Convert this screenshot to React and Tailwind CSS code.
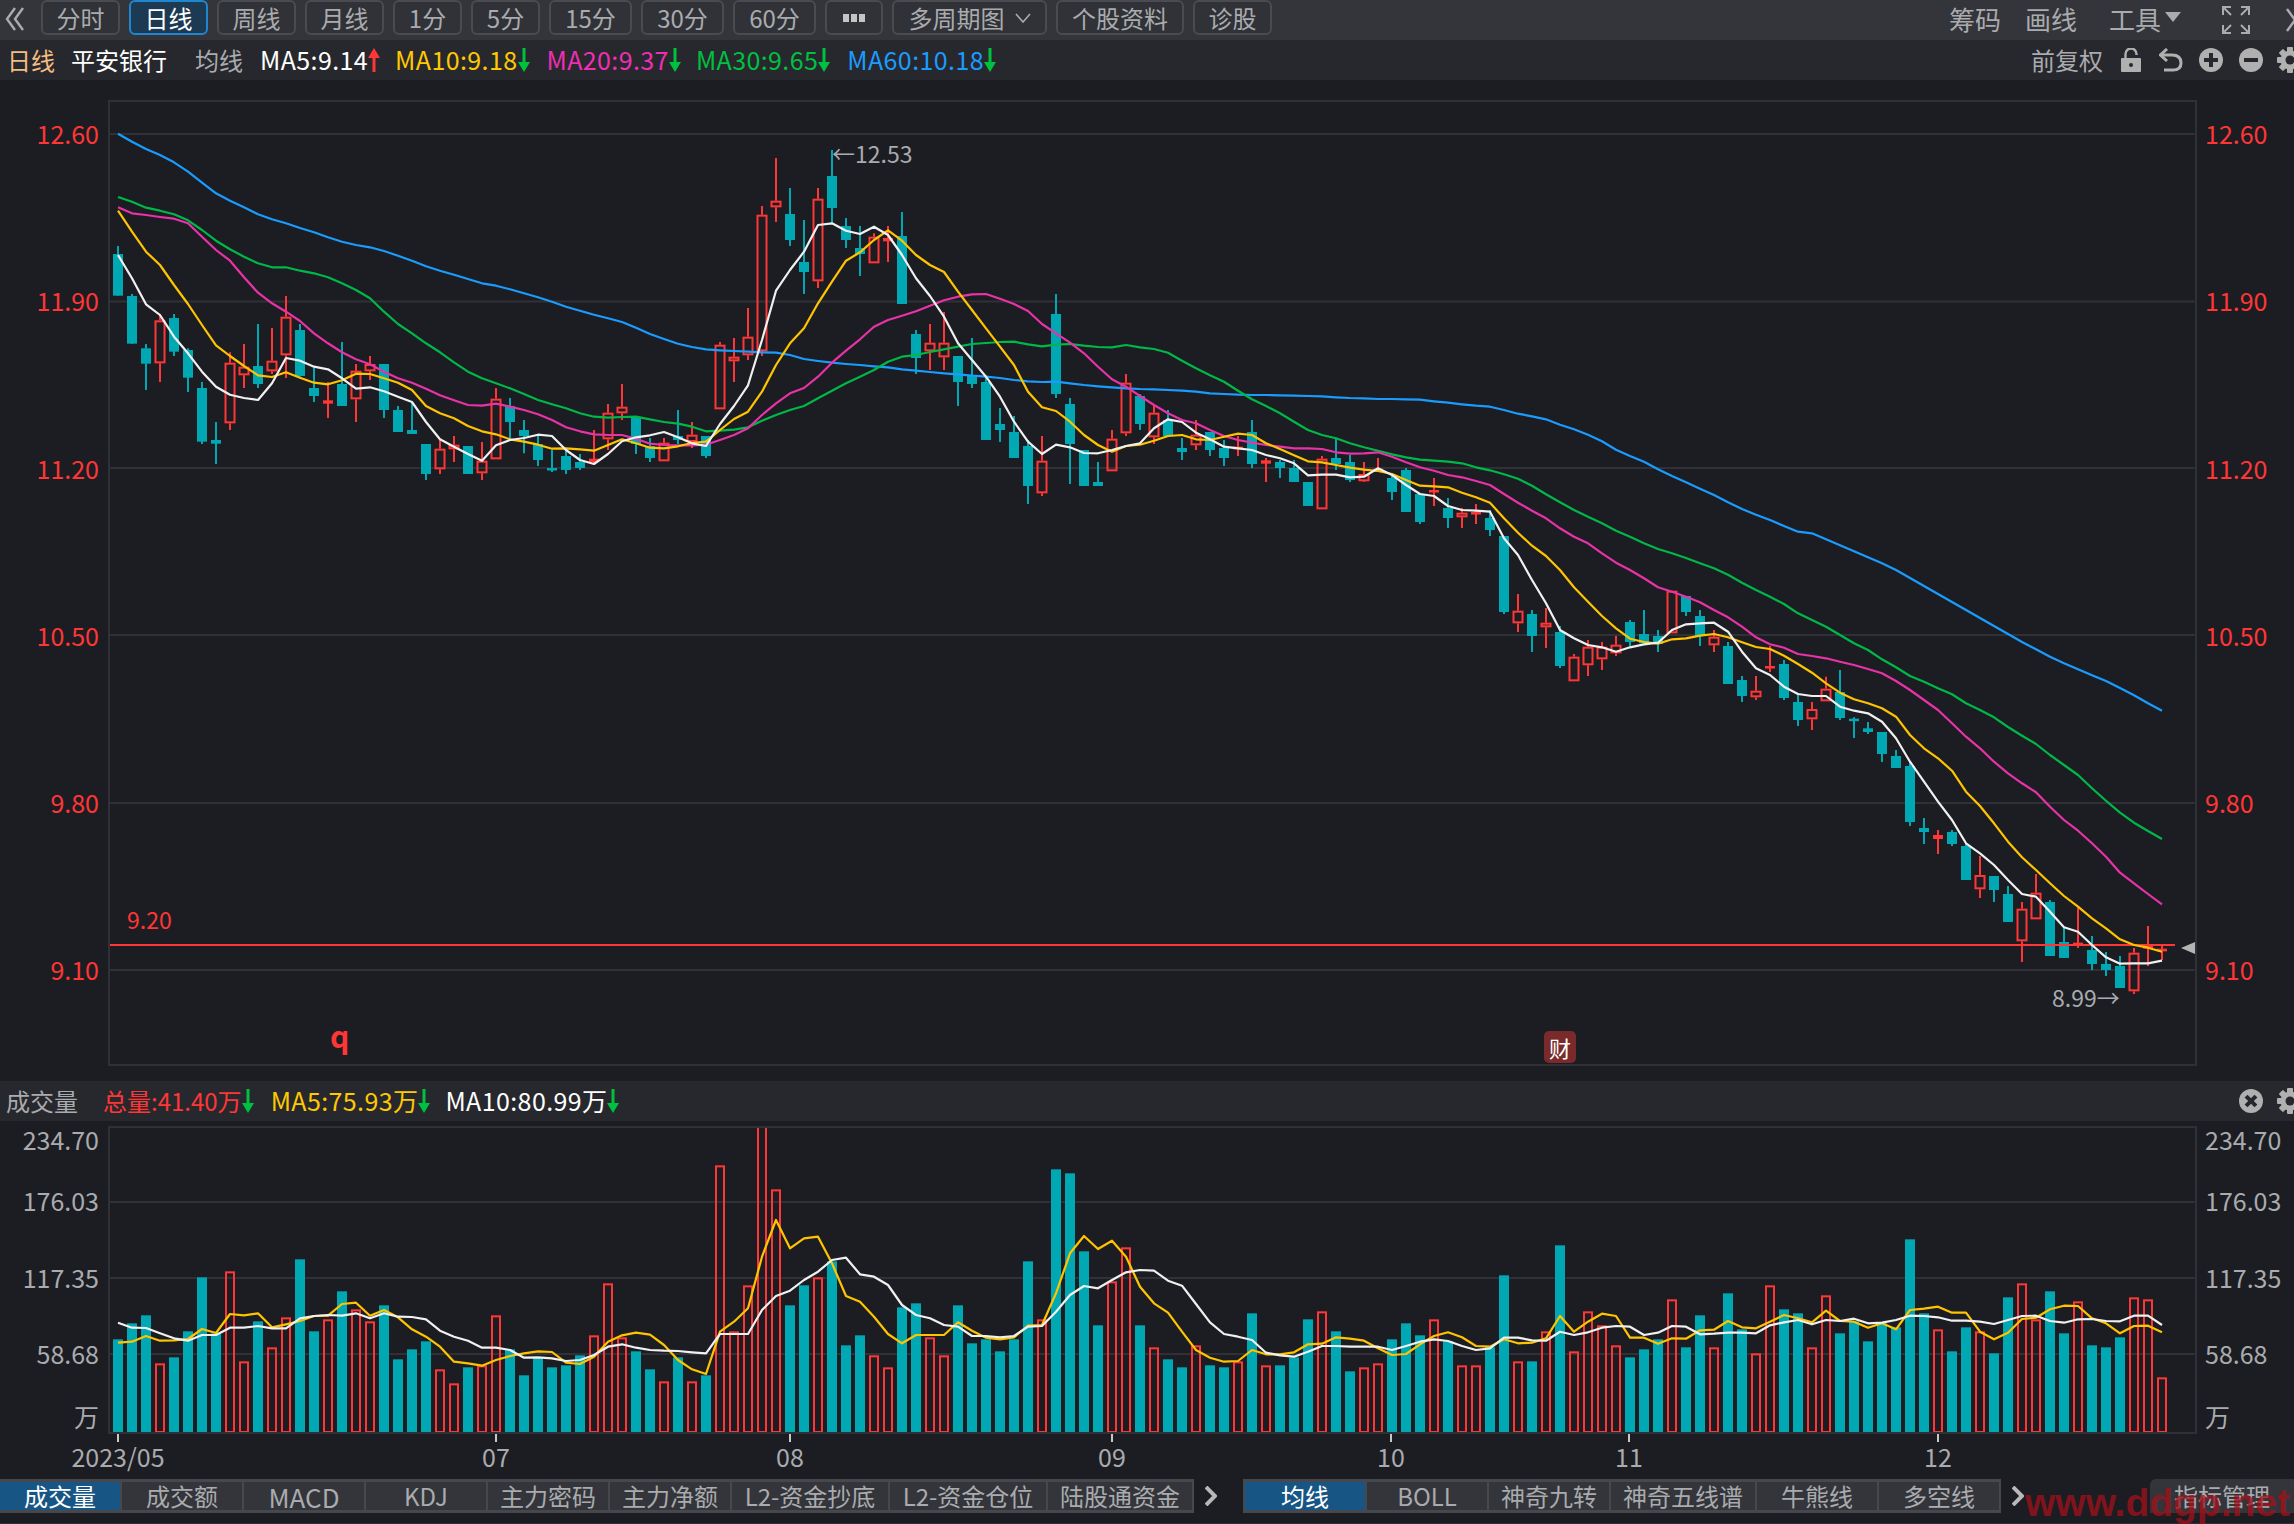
import React from "react";

const FX = (i) => 118 + 14 * i;

// [red?, bodyTop, bodyBottom, wickHigh, wickLow] in three traced scales
const C1 = [
[0,402,527,378,527],[0,528,671,522,671],[0,685,731,672,810],[1,601,730,582,786],[0,594,695,582,708],[0,690,773,685,816],[0,804,965,786,972],[0,960,971,906,1032],[1,728,910,697,930],[1,740,766,672,804],
[0,738,792,612,804],[1,722,754,624,762],[1,590,706,528,774],[0,630,768,612,770],[0,804,828,742,846],[1,841,851,786,894],[0,792,858,666,858],[1,752,838,732,906],[1,732,754,708,780],[0,732,870,732,894],
[0,870,936,858,936],[0,930,942,846,942],[0,972,1062,972,1080],[1,986,1048,960,1062],[1,974,988,948,1026],[0,978,1062,978,1062],[1,1022,1060,966,1080],[1,836,1018,804,1018],[0,858,906,834,960],[0,930,948,900,1000],
[0,972,1020,948,1038],[0,1044,1050,990,1056],[0,1008,1050,990,1062],[0,1026,1044,1002,1050],[1,1016,1026,930,1030],[1,878,958,852,990],[1,860,880,792,900],[0,894,972,894,1002],[0,978,1014,954,1026],[1,968,1024,954,1024],
[0,948,960,870,972],[1,944,966,906,984],[0,948,1008,948,1014],[1,674,868,666,868],[1,710,724,654,786],[1,650,706,564,720],[1,284,694,258,708],[1,242,262,114,306],[0,282,360,204,378],[0,426,456,300,522],
[1,236,484,204,504],[0,168,264,90,310],[0,318,360,294,384],[0,384,402,318,468],[1,350,430,340,430],[1,354,364,318,426],[0,348,552,276,552],[0,642,714,630,762],[1,668,694,612,750],[1,668,712,576,750],
[0,708,786,708,858],[0,768,792,654,804],[0,786,960,768,960],[0,912,930,864,966],[0,936,1014,888,1014],[0,978,1098,960,1152],[1,1022,1120,948,1128],[0,582,822,522,834],[0,852,972,834,1092],[0,990,1098,990,1098],
[0,1086,1098,1026,1098],[1,956,1054,930,1054],[1,788,940,762,948],[0,828,912,822,930],[1,878,952,858,972],[0,900,948,870,950],[0,984,996,954,1020],[1,944,976,900,990],[0,936,990,936,1008],[0,984,1014,960,1038],
[1,980,988,948,1008],[0,936,1032,900,1044],[1,1021,1031,1014,1086],[0,1026,1044,1020,1074],[0,1044,1086,1020,1086],[0,1086,1158,1086,1158],[1,1016,1168,1008,1168],
];
const C2 = [
[0,174,192,117,210],[0,186,240,165,246],[1,222,244,186,246],[1,206,216,174,216],[0,234,276,228,300],[0,210,336,204,336],[0,282,366,282,372],[1,270,276,234,318],[0,324,354,294,384],[1,338,352,324,384],
[1,336,342,312,372],[0,354,390,330,408],[0,408,636,408,642],[1,632,670,582,696],[0,642,708,630,756],[1,668,682,624,744],[0,696,798,678,804],[1,770,844,762,844],[1,740,796,720,828],[1,740,778,726,810],
[1,734,760,708,768],[0,666,726,660,738],[0,702,730,630,730],[0,708,732,690,756],[1,572,700,572,700],[0,588,636,588,648],[0,648,708,630,738],[1,710,736,690,756],[0,738,852,726,852],[0,840,888,828,906],
[1,872,892,828,900],[1,798,804,738,816],[0,792,894,780,900],[0,906,960,882,978],
];
const C3 = [
[1,87,118,66,150],[1,26,64,-10,64],[0,36,114,-30,120],[0,116,119,112,174],[0,145,156,126,162],[0,156,222,156,246],[0,228,264,210,264],[0,258,426,246,438],[0,444,456,414,492],[1,465,477,450,522],
[0,456,492,450,498],[0,498,600,490,600],[1,585,628,528,654],[0,588,630,588,666],[0,642,726,618,726],[1,686,784,666,846],[1,638,718,582,718],[0,666,828,660,828],[0,786,834,744,834],[1,788,796,684,804],
[0,810,852,768,870],[0,852,870,816,888],[0,858,924,828,924],[1,818,934,804,942],[1,798,806,738,858],[1,806,814,798,840],
];
const conv = (b) => (r) => [r[0], b + r[1] / 3, b + r[2] / 3, b + r[3] / 3, b + r[4] / 3];
const CANDLES = [...C1.map(conv(120)), ...C2.map(conv(400)), ...C3.map(conv(680))];

const ma = (a, b, c, d) => [
  ...a.map((y) => 120 + y / 3),
  ...b.map((y) => 120 + y / 3),
  ...c.map((y) => 400 + y / 3),
  ...d.map((y) => 680 + y / 3),
].map((y, i) => `${FX(i)},${y.toFixed(1)}`).join(" ");

const MA5 = ma(
[405,475,553,585,650,700,755,800,824,834,840,790,714,722,740,748,775,806,802,814,830,846,906,958,980,1002,1022,976,960,954,944,948,990,1020,1032,1002,964,952,946,936,952,970,978,912,858,796,660,512,450],
[395,315,310,332,342,320,345,405,475,528,590,670,720,770,830,905,965,1002,974,982,999,1000,990,978,970,925,898,906,938,958,980,985,990,1005,1015,1030,1066,1064,1064,1072,1070],
[205,225,255,282,288,318,330,332,335,415,465,540,610,690,715,735,742,755,742,733,728,690,673,670,668,695,755,805,825,860,882],
[48,48,80,92,100,125,175,245,305,365,420,490,520,555,600,642,650,695,742,755,795,832,851,850,850,842]);
const MA10 = ma(
[272,335,395,435,495,552,615,676,708,738,766,771,757,773,788,793,781,761,762,775,788,810,858,880,895,918,934,943,958,965,974,986,985,988,992,975,958,970,983,985,979,969,965,930,897,875,815,735,670],
[625,550,485,422,397,360,331,362,405,435,456,515,570,625,680,735,815,862,873,905,945,975,995,978,974,962,948,945,958,960,950,941,945,970,987,1006,1024,1027,1035,1043,1049],
[213,222,240,257,259,262,278,292,308,355,398,437,468,510,562,605,648,685,716,726,731,718,715,707,702,712,727,741,747,767,792],
[-22,10,38,58,70,85,110,165,205,235,272,335,378,430,485,532,570,610,648,680,715,745,778,795,803,815]);
const MA20 = ma(
[262,280,285,291,296,310,350,390,422,472,518,550,575,603,640,670,697,718,733,755,775,788,806,826,841,855,857,851,860,870,883,900,922,934,943,945,945,956,971,975,976,976,974,960,945,925,885,850,820],
[804,770,728,692,658,620,600,587,574,557,541,530,523,522,536,552,573,612,640,668,700,740,778,800,828,855,880,900,910,930,948,960,968,975,980,985,985,987,997,1001,1000],
[157,170,187,202,212,225,232,243,255,282,308,332,355,385,410,430,460,488,510,535,562,575,590,607,630,652,680,712,733,743,762],
[-72,-65,-55,-45,-33,-20,3,30,60,90,130,170,205,245,280,310,337,380,420,452,490,530,578,610,642,673]);
const MA30 = ma(
[231,245,263,272,283,301,330,362,388,410,430,442,442,452,460,472,490,510,535,575,612,640,670,697,727,755,775,790,805,822,840,853,865,880,890,893,891,890,898,906,911,920,934,932,929,922,902,885,870],
[858,835,812,790,770,750,725,710,705,696,688,680,672,669,666,665,673,679,674,672,677,681,682,675,682,687,698,722,745,766,785,812,838,858,880,905,930,945,955,970,982],
[152,163,172,179,182,185,190,202,211,223,236,257,283,307,330,350,370,392,410,430,447,460,474,490,505,524,548,570,590,612,640],
[-180,-160,-135,-110,-90,-62,-38,-12,5,25,43,70,90,112,141,167,192,225,255,285,325,362,398,428,453,477]);
const MA60 = ma(
[41,65,87,105,127,155,188,220,242,262,283,298,310,324,337,352,365,375,382,393,407,422,439,452,464,477,490,497,508,520,532,545,560,572,584,595,606,623,642,657,671,681,688,691,693,695,697,698,705],
[717,723,728,732,735,739,742,748,752,756,760,763,767,770,774,780,784,786,785,790,795,799,802,805,807,808,810,812,815,820,822,824,825,825,826,827,828,829,832,834,835],
[-3,-3,-2,-1,4,8,13,17,20,30,41,49,58,74,88,104,124,149,168,185,208,228,247,266,285,307,327,344,360,378,395],
[-440,-422,-404,-386,-368,-350,-330,-306,-282,-258,-234,-210,-186,-162,-138,-114,-92,-70,-50,-32,-14,3,24,46,70,92]);

const VOL = [
838,790,766,-910,892,814,652,820,-634,-904,784,-862,-772,598,814,-778,694,-748,-784,736,898,868,844,-928,-970,922,-916,-766,868,946,892,922,916,886,-826,-670,-832,874,928,-964,892,-964,946,-316,-814,-676,-197,-388,736,676,-652,604,856,826,-886,-922,742,730,-832,-886,736,850,838,874,838,604,-778,328,340,574,796,-664,-562,796,
-862,898,922,-856,916,922,-904,760,-916,916,892,778,-754,814,934,-922,-910,838,790,826,-778,844,-916,-916,862,646,-904,904,-814,556,-874,-754,-796,-856,892,868,838,-718,862,766,-862,700,808,-880,-676,748,760,-862,-706,820,784,844,790,802,538,760,-808,874,802,-814,880,712,-670,-778,694,820,-724,856,862,832,-712,-718,-952,
];
const vline = (arr) => arr.map((y, i) => `${FX(i)},${(1060 + y / 3).toFixed(1)}`).join(" ");
const VMA5 = vline([
848,845,828,842,841,837,807,819,762,766,760,802,793,783,768,767,732,728,767,750,772,808,830,860,905,910,917,900,888,880,874,876,908,912,890,845,826,818,824,855,900,928,942,815,785,745,590,480,565,535,530,610,708,725,770,822,850,825,825,825,787,812,833,838,832,797,795,700,580,528,567,542,590,680,
730,758,815,870,893,905,903,870,883,883,877,853,851,832,836,842,865,885,882,853,828,817,832,858,860,838,850,848,835,768,815,785,761,768,833,833,851,835,836,811,809,783,802,805,785,765,775,787,752,783,785,803,790,808,750,746,740,758,758,815,838,818,777,773,748,737,738,775,790,820,798,797,817]);
const VMA10 = vline([
788,803,804,820,835,842,825,825,803,803,798,805,805,775,768,765,767,760,775,760,770,771,778,812,830,842,863,863,870,893,892,895,903,900,885,860,853,863,870,872,873,877,880,822,822,822,750,708,692,660,635,600,593,643,650,675,735,765,775,795,800,828,828,832,828,800,798,755,705,678,685,660,637,630,
632,662,677,732,787,822,830,840,878,886,890,875,858,858,860,860,860,870,858,845,838,843,858,870,865,833,833,841,842,815,825,817,803,798,800,825,818,798,800,823,821,818,818,820,796,787,780,793,780,783,776,790,788,780,767,768,772,782,782,785,792,780,768,767,783,788,778,777,783,784,767,767,795]);

const RED = "#ff3636";
const TEAL = "#00a8b3";
const GRID = "#303136";

function Candles() {
  return CANDLES.map((c, i) => {
    const x = FX(i);
    const [red, top, bot, hi, lo] = c;
    const col = red ? RED : TEAL;
    const thin = bot - top <= 4.5;
    return (
      <g key={i}>
        {red && !thin ? (
          <>
            <line x1={x} x2={x} y1={hi} y2={top} stroke={col} strokeWidth="2" />
            <line x1={x} x2={x} y1={bot} y2={lo} stroke={col} strokeWidth="2" />
            <rect x={x - 4.5} y={top + 1} width="9" height={Math.max(bot - top - 2, 1)} fill="none" stroke={col} strokeWidth="2" />
          </>
        ) : (
          <>
            <line x1={x} x2={x} y1={hi} y2={lo} stroke={col} strokeWidth="2" />
            <rect x={x - 5} y={top} width="10" height={Math.max(bot - top, 2.5)} fill={col} />
          </>
        )}
      </g>
    );
  });
}

function VolBars() {
  return VOL.map((v, i) => {
    const x = FX(i);
    const top = 1060 + Math.abs(v) / 3;
    return v < 0 ? (
      <rect key={i} x={x - 4} y={top + 1} width="8" height={1431 - top} fill="none" stroke={RED} strokeWidth="2" />
    ) : (
      <rect key={i} x={x - 5} y={top} width="10" height={1432 - top} fill={TEAL} />
    );
  });
}

const Line = ({ p, c, w = 2.2 }) => <polyline points={p} fill="none" stroke={c} strokeWidth={w} strokeLinejoin="round" />;

const Down = () => (
  <svg viewBox="0 0 12 24" className="w-[12px] h-[24px] shrink-0">
    <path d="M4.5 0H7.5V14H12L6 24L0 14H4.5Z" fill="#00c040" />
  </svg>
);
const Up = () => (
  <svg viewBox="0 0 12 24" className="w-[12px] h-[24px] shrink-0">
    <path d="M4.5 24H7.5V10H12L6 0L0 10H4.5Z" fill="#ff3636" />
  </svg>
);

function Btn({ w, active, children }) {
  return (
    <div
      style={{ width: w }}
      className={
        "h-[35px] shrink-0 rounded-[6px] border-2 flex items-center justify-center leading-none " +
        (active ? "border-[#1f86cf] bg-[#1c3a52] text-white" : "border-[#494b50] bg-[#303237] text-[#a9abae]")
      }
    >
      {children}
    </div>
  );
}

function Tab({ w, active, cls = "", children }) {
  return (
    <div
      style={{ width: w }}
      className={
        "h-full shrink-0 flex items-center justify-center " + cls + " " +
        (active ? "bg-[#175585] text-white" : "bg-[#33353a] text-[#a9abae]")
      }
    >
      {children}
    </div>
  );
}

const Chev = ({ left, cls = "" }) => (
  <svg viewBox="0 0 20 24" className={cls} fill="none" stroke="#a9abae" strokeWidth="2.4">
    {left ? (
      <>
        <path d="M10 1L2 12L10 23" />
        <path d="M18 1L10 12L18 23" />
      </>
    ) : (
      <>
        <path d="M2 1L10 12L2 23" />
        <path d="M10 1L18 12L10 23" />
      </>
    )}
  </svg>
);

const Gear = ({ bg }) => (
  <svg viewBox="0 0 26 26" className="w-[26px] h-[26px] shrink-0">
    <g fill="#b0b0b0">
      {[0, 45, 90, 135].map((a) => (
        <rect key={a} x="10" y="0" width="6" height="26" rx="1" transform={`rotate(${a} 13 13)`} />
      ))}
      <circle cx="13" cy="13" r="9.5" />
    </g>
    <circle cx="13" cy="13" r="4.5" fill={bg} />
  </svg>
);

const CircleIcon = ({ kind }) => (
  <svg viewBox="0 0 24 24" className="w-[24px] h-[24px] shrink-0">
    <circle cx="12" cy="12" r="12" fill="#b0b0b0" />
    <g fill="#27282d" transform={kind === "x" ? "rotate(45 12 12)" : undefined}>
      <rect x="5" y="10" width="14" height="4" />
      {kind !== "minus" && <rect x="10" y="5" width="4" height="14" />}
    </g>
  </svg>
);

const Axis = ({ children, right, cls = "" }) => (
  <div className={"h-[40px] flex items-center " + (right ? "" : "justify-end pr-[9px] ") + cls}>{children}</div>
);
const PRICES = ["12.60", "11.90", "11.20", "10.50", "9.80", "9.10"];

const PriceAxis = ({ right }) => (
  <div className={"flex flex-col gap-[127.2px] pt-[34px] text-[25px] text-[#ff3636] " + (right ? "pl-[8px]" : "w-[108px] shrink-0")}>
    {PRICES.map((p) => (
      <Axis key={p} right={right}>{p}</Axis>
    ))}
  </div>
);

const VolAxis = ({ right }) => (
  <div className={"flex flex-col text-[25px] text-[#a9abae] pt-[5px] " + (right ? "pl-[8px]" : "w-[108px] shrink-0")}>
    <div className={"h-[28px] flex items-center " + (right ? "" : "justify-end pr-[9px]")}>234.70</div>
    <div className={"h-[28px] mt-[33px] flex items-center " + (right ? "" : "justify-end pr-[9px]")}>176.03</div>
    <div className={"h-[28px] mt-[49px] flex items-center " + (right ? "" : "justify-end pr-[9px]")}>117.35</div>
    <div className={"h-[28px] mt-[48px] flex items-center " + (right ? "" : "justify-end pr-[9px]")}>58.68</div>
    <div className={"h-[28px] mt-[35px] flex items-center " + (right ? "" : "justify-end pr-[9px]")}>万</div>
  </div>
);

const DATES = [
  ["2023/05", 118],
  ["07", 496],
  ["08", 790],
  ["09", 1112],
  ["10", 1391],
  ["11", 1629],
  ["12", 1938],
];

const Sep = () => (
  <svg viewBox="0 0 12 20" className="w-[12px] h-[20px]" fill="none" stroke="#b8b8b8" strokeWidth="4">
    <path d="M1 1L10 10L1 19" />
  </svg>
);

export default function App() {
  return (
    <div className="relative w-[2294px] h-[1524px] overflow-hidden flex flex-col bg-[#1c1d22] text-[24px] font-['Noto_Sans_CJK_SC','Noto_Sans',sans-serif]">
      {/* toolbar */}
      <div className="h-[40px] shrink-0 bg-[#33353a] flex items-start text-[#a9abae]">
        <Chev left cls="w-[20px] h-[24px] mt-[7px] ml-[5px] mr-[16px] shrink-0" />
        <div className="flex gap-[9px]">
          <Btn w={79}>分时</Btn>
          <Btn w={79} active>日线</Btn>
          <Btn w={79}>周线</Btn>
          <Btn w={79}>月线</Btn>
          <Btn w={69}>1分</Btn>
          <Btn w={69}>5分</Btn>
          <Btn w={83}>15分</Btn>
          <Btn w={83}>30分</Btn>
          <Btn w={83}>60分</Btn>
          <Btn w={58}>
            <span className="flex gap-[2px]">
              <i className="block w-[6px] h-[8px] bg-[#c4c4c4]" />
              <i className="block w-[6px] h-[8px] bg-[#c4c4c4]" />
              <i className="block w-[6px] h-[8px] bg-[#c4c4c4]" />
            </span>
          </Btn>
          <Btn w={155}>
            多周期图
            <svg viewBox="0 0 16 10" className="w-[16px] h-[10px] ml-[10px]" fill="none" stroke="#a9abae" strokeWidth="1.6">
              <path d="M1 1L8 9L15 1" />
            </svg>
          </Btn>
          <Btn w={128}>个股资料</Btn>
          <Btn w={79}>诊股</Btn>
        </div>
        <div className="flex items-center h-[40px] ml-[677px] text-[26px] leading-none">
          <span className="w-[52px] shrink-0 mb-[3px]">筹码</span>
          <span className="w-[52px] shrink-0 ml-[24px] mb-[3px]">画线</span>
          <span className="w-[52px] shrink-0 ml-[32px] mb-[3px]">工具</span>
          <svg viewBox="0 0 16 10" className="w-[16px] h-[10px] ml-[4px] mt-[-6px] shrink-0">
            <path d="M0 0H16L8 10Z" fill="#a9abae" />
          </svg>
          <svg viewBox="0 0 28 28" className="w-[28px] h-[28px] ml-[41px] shrink-0" fill="none" stroke="#a9abae" strokeWidth="2">
            <path d="M1 9V1H9M1 1L9 9M19 1H27V9M27 1L19 9M1 19V27H9M1 27L9 19M27 19V27H19M27 27L19 19" />
          </svg>
          <Chev cls="w-[20px] h-[24px] ml-[35px] shrink-0" />
        </div>
      </div>

      {/* info row */}
      <div className="h-[40px] shrink-0 bg-[#27282d] flex items-center pl-[7px]">
        <span className="text-[#f2bd80]">日线</span>
        <span className="text-white ml-[16px]">平安银行</span>
        <span className="text-[#a9abae] ml-[28px]">均线</span>
        <span className="flex items-center text-[25px] tracking-[0.4px] text-white ml-[17px]">MA5:9.14<Up /></span>
        <span className="flex items-center text-[25px] tracking-[0.4px] text-[#ffc800] ml-[15px]">MA10:9.18<Down /></span>
        <span className="flex items-center text-[25px] tracking-[0.4px] text-[#f02eb4] ml-[17px]">MA20:9.37<Down /></span>
        <span className="flex items-center text-[25px] tracking-[0.4px] text-[#00c040] ml-[15px]">MA30:9.65<Down /></span>
        <span className="flex items-center text-[25px] tracking-[0.4px] text-[#1a9cff] ml-[17px]">MA60:10.18<Down /></span>
        <div className="ml-auto mr-[-9px] flex items-center text-[#a9abae]">
          <span className="w-[72px] mr-[18px] whitespace-nowrap">前复权</span>
          <svg viewBox="0 0 20 24" className="w-[20px] h-[24px] mr-[18px] shrink-0">
            <path d="M4.5 10V6a5.5 5.5 0 0 1 11 0V7" fill="none" stroke="#b0b0b0" strokeWidth="2.4" />
            <rect x="0" y="10" width="20" height="14" rx="1" fill="#b0b0b0" />
            <circle cx="10" cy="17" r="2" fill="#27282d" />
          </svg>
          <svg viewBox="0 0 24 24" className="w-[24px] h-[24px] mr-[16px] shrink-0" fill="none" stroke="#b0b0b0" strokeWidth="3">
            <path d="M8 1L1.5 7L8 13" />
            <path d="M2 7H13Q22 7 22 15Q22 22 14 22H5" />
          </svg>
          <CircleIcon kind="plus" />
          <div className="w-[16px] shrink-0" />
          <CircleIcon kind="minus" />
          <div className="w-[14px] shrink-0" />
          <Gear bg="#27282d" />
        </div>
      </div>

      {/* price chart */}
      <div className="h-[1001px] shrink-0 flex">
        <PriceAxis />
        <div className="relative mt-[20px] w-[2089px] h-[966px] shrink-0 border-2 border-[#303136]">
          <svg viewBox="110 102 2085 962" className="absolute inset-0 w-full h-full">
            {[134, 301.4, 468, 635, 803, 970].map((y) => (
              <line key={y} x1="110" x2="2195" y1={y} y2={y} stroke={GRID} strokeWidth="2" />
            ))}
            <Candles />
            <line x1="110" x2="2175" y1="945" y2="945" stroke={RED} strokeWidth="2" />
            <Line p={MA60} c="#1a9cff" />
            <Line p={MA30} c="#00b848" />
            <Line p={MA20} c="#e832a8" />
            <Line p={MA10} c="#ffc400" />
            <Line p={MA5} c="#f0f0f0" />
            <polygon points="2181,948 2195,942 2195,954" fill="#b4b4b4" />
          </svg>
          <span className="absolute left-[17px] top-[802px] text-[23px] leading-[30px] text-[#ff3636]">9.20</span>
          <span className="absolute left-[722px] top-[36px] text-[23px] leading-[30px] text-[#a9abae]">←12.53</span>
          <span className="absolute left-[1942px] top-[880px] text-[23px] leading-[30px] text-[#a9abae]">8.99→</span>
          <span className="absolute left-[220px] top-[918px] text-[30px] leading-[30px] font-bold text-[#ff3636]">q</span>
          <span className="absolute left-[1434px] top-[929px] w-[32px] h-[32px] rounded-[5px] bg-[#7a2a2a] text-white text-[22px] flex items-center justify-center leading-none">财</span>
        </div>
        <PriceAxis right />
      </div>

      {/* volume header */}
      <div className="h-[40px] shrink-0 bg-[#27282d] flex items-center pl-[6px]">
        <span className="text-[#a9abae]">成交量</span>
        <span className="flex items-center text-[#ff3636] ml-[25px]">总量:41.40万<Down /></span>
        <span className="flex items-center text-[25px] tracking-[0.4px] text-[#ffc800] ml-[17px]">MA5:75.93万<Down /></span>
        <span className="flex items-center text-[25px] tracking-[0.4px] text-white ml-[15px]">MA10:80.99万<Down /></span>
        <div className="ml-auto mr-[-9px] flex items-center">
          <CircleIcon kind="x" />
          <div className="w-[14px] shrink-0" />
          <Gear bg="#27282d" />
        </div>
      </div>

      {/* volume chart */}
      <div className="h-[358px] shrink-0 flex">
        <VolAxis />
        <div className="mt-[5px] w-[2089px] shrink-0 flex flex-col">
          <div className="relative h-[308px] border-2 border-[#303136]">
            <svg viewBox="110 1128 2085 304" className="absolute inset-0 w-full h-full">
              {[1202, 1278, 1354].map((y) => (
                <line key={y} x1="110" x2="2195" y1={y} y2={y} stroke={GRID} strokeWidth="2" />
              ))}
              <VolBars />
              <Line p={VMA5} c="#ffc400" />
              <Line p={VMA10} c="#f0f0f0" />
            </svg>
          </div>
          <div className="relative h-[45px] text-[25px] text-[#a9abae]">
            {DATES.map(([d, x]) => (
              <React.Fragment key={d}>
                <i style={{ left: x - 109 }} className="absolute top-0 w-[2px] h-[8px] bg-[#c8c8c8]" />
                <span style={{ left: x - 108 }} className="absolute top-[8px] -translate-x-1/2 leading-[28px]">{d}</span>
              </React.Fragment>
            ))}
          </div>
        </div>
        <VolAxis right />
      </div>

      {/* tabs */}
      <div className="h-[34px] shrink-0 flex">
        <div className="flex gap-[2px] py-[3px] pr-[2px] bg-[#46484d]">
          <Tab w={120} active>成交量</Tab>
          <Tab w={120}>成交额</Tab>
          <Tab w={120} cls="text-[26px]">MACD</Tab>
          <Tab w={120}>KDJ</Tab>
          <Tab w={120}>主力密码</Tab>
          <Tab w={120}>主力净额</Tab>
          <Tab w={156}>L2-资金抄底</Tab>
          <Tab w={156}>L2-资金仓位</Tab>
          <Tab w={144}>陆股通资金</Tab>
        </div>
        <div className="w-[49px] shrink-0 flex items-center pl-[11px]"><Sep /></div>
        <div className="flex gap-[2px] py-[3px] px-[2px] bg-[#46484d]">
          <Tab w={120} active>均线</Tab>
          <Tab w={120}>BOLL</Tab>
          <Tab w={120}>神奇九转</Tab>
          <Tab w={144}>神奇五线谱</Tab>
          <Tab w={120}>牛熊线</Tab>
          <Tab w={120}>多空线</Tab>
        </div>
        <div className="w-[149px] shrink-0 flex items-center pl-[11px]"><Sep /></div>
        <div className="flex-1 rounded-tl-[6px] bg-[#33353a] text-[#a9abae] flex items-center justify-center">指标管理</div>
      </div>

      <div className="flex-1 border-b border-[#303136]" />

      <span className="absolute left-[2025px] top-[1483px] whitespace-nowrap text-[39px] leading-[40px] font-bold text-[#a3101a]/75 font-['Liberation_Sans',sans-serif]">
        www.ddgp.net
      </span>
    </div>
  );
}
